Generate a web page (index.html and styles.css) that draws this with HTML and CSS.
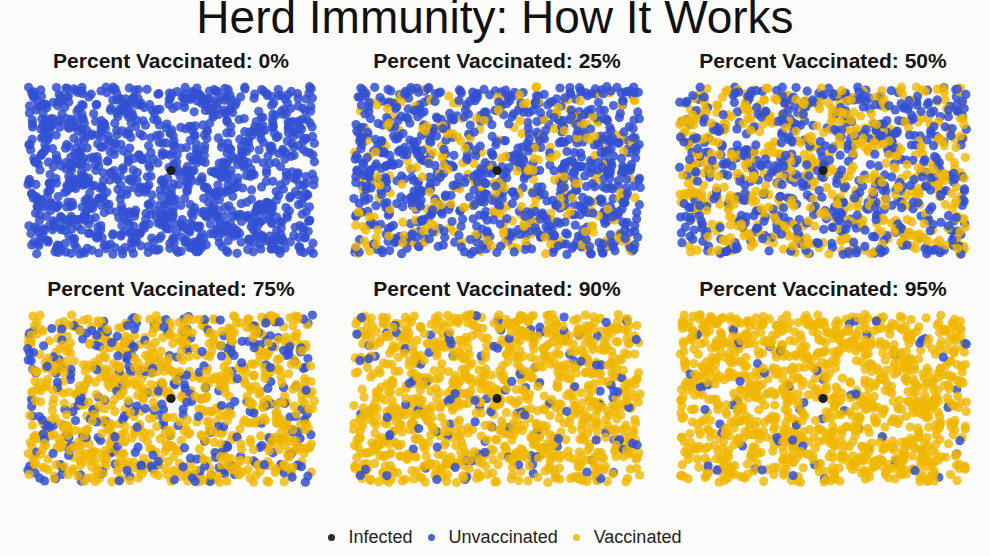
FILE: index.html
```html
<!DOCTYPE html>
<html>
<head>
<meta charset="utf-8">
<title>Herd Immunity: How It Works</title>
<link rel="stylesheet" href="styles.css">
</head>
<body>
<div class="page">
  <h1 class="title">Herd Immunity: How It Works</h1>
  <div class="panels">
    <div class="panel"><h2 class="subtitle">Percent Vaccinated: 0%</h2><div class="plot" data-pct="0"></div></div>
    <div class="panel"><h2 class="subtitle">Percent Vaccinated: 25%</h2><div class="plot" data-pct="25"></div></div>
    <div class="panel"><h2 class="subtitle">Percent Vaccinated: 50%</h2><div class="plot" data-pct="50"></div></div>
    <div class="panel"><h2 class="subtitle">Percent Vaccinated: 75%</h2><div class="plot" data-pct="75"></div></div>
    <div class="panel"><h2 class="subtitle">Percent Vaccinated: 90%</h2><div class="plot" data-pct="90"></div></div>
    <div class="panel"><h2 class="subtitle">Percent Vaccinated: 95%</h2><div class="plot" data-pct="95"></div></div>
  </div>
  <div class="legend">
    <div class="legend-item"><span class="key key-inf"></span><span class="legend-label">Infected</span></div>
    <div class="legend-item"><span class="key key-unv"></span><span class="legend-label">Unvaccinated</span></div>
    <div class="legend-item"><span class="key key-vac"></span><span class="legend-label">Vaccinated</span></div>
  </div>
</div>
<script src="script.js"></script>
</body>
</html>
```
FILE: styles.css
```css
html, body {
  margin: 0;
  padding: 0;
  background: #fcfdfb;
}
.page {
  width: 990px;
  height: 556px;
  overflow: hidden;
  font-family: "Liberation Sans", Arial, sans-serif;
  color: #1a1a1a;
}
.title {
  margin: -2px 0 0 0;
  font-size: 46px;
  line-height: 38px;
  font-weight: normal;
  text-align: center;
  color: #111;
}
.panels {
  display: grid;
  grid-template-columns: repeat(3, 296px);
  column-gap: 30px;
  row-gap: 18px;
  padding-left: 23px;
  margin-top: 13px;
}
.panel {
  display: flex;
  flex-direction: column;
  align-items: center;
  gap: 9px;
}
.subtitle {
  margin: 0;
  font-size: 21px;
  line-height: 24px;
  font-weight: bold;
  white-space: nowrap;
  color: #151515;
}
.plot {
  width: 296px;
  height: 177px;
}
.plot svg {
  display: block;
}
.dot-unv {
  fill: #3350d2;
  fill-opacity: 0.85;
}
.dot-vac {
  fill: #f0b600;
  fill-opacity: 0.8;
}
.dot-inf {
  fill: #1e1e1e;
}
.legend {
  display: flex;
  justify-content: center;
  align-items: center;
  gap: 15px;
  margin-top: 40px;
  padding-left: 19px;
  font-size: 18px;
  line-height: 20px;
  color: #222;
}
.legend-item {
  display: flex;
  align-items: center;
  gap: 14px;
}
.key {
  width: 7px;
  height: 7px;
  border-radius: 50%;
  display: inline-block;
}
.key-inf { background: #2a2a2a; }
.key-unv { background: #4a63d0; }
.key-vac { background: #f2c12e; }
```
FILE: script.js
```js
function mulberry(seed) {
  return function () {
    seed |= 0; seed = seed + 0x6D2B79F5 | 0;
    var t = Math.imul(seed ^ seed >>> 15, 1 | seed);
    t = t + Math.imul(t ^ t >>> 7, 61 | t) ^ t;
    return ((t ^ t >>> 14) >>> 0) / 4294967296;
  };
}
var NS = 'http://www.w3.org/2000/svg';
document.querySelectorAll('.plot').forEach(function (el, i) {
  var p = +el.dataset.pct / 100;
  var rnd = mulberry(9173 + i * 7919);
  var W = 296, H = 177, R = 4.6, N = 1150;
  var svg = document.createElementNS(NS, 'svg');
  svg.setAttribute('width', W);
  svg.setAttribute('height', H);
  svg.setAttribute('viewBox', '0 0 ' + W + ' ' + H);
  for (var k = 0; k < N; k++) {
    var c = document.createElementNS(NS, 'circle');
    c.setAttribute('cx', (R + rnd() * (W - 2 * R)).toFixed(1));
    c.setAttribute('cy', (R + rnd() * (H - 2 * R)).toFixed(1));
    c.setAttribute('r', R);
    c.setAttribute('class', rnd() < p ? 'dot-vac' : 'dot-unv');
    svg.appendChild(c);
  }
  var inf = document.createElementNS(NS, 'circle');
  inf.setAttribute('cx', 148);
  inf.setAttribute('cy', 88.5);
  inf.setAttribute('r', R);
  inf.setAttribute('class', 'dot-inf');
  svg.appendChild(inf);
  el.appendChild(svg);
});
```
